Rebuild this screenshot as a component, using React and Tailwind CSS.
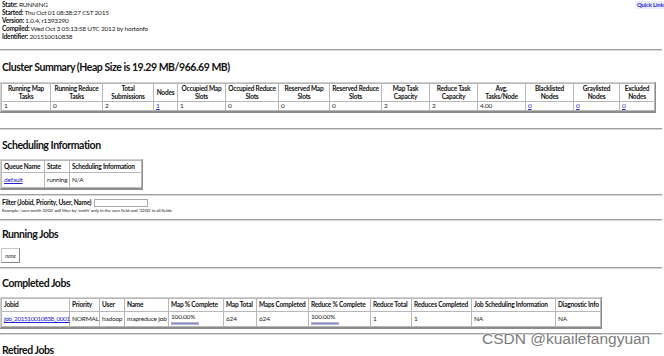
const F = "font-['Lato',sans-serif]";

function Hr({ className = "" }) {
  return <div className={"h-[2px] w-[662px] border-t border-t-[#a0a0a0] border-b border-b-[#d8d8d8] " + className} />;
}

function H({ children, className = "" }) {
  return (
    <div className={"h-[14px] pl-[2px] text-[10.5px] leading-[14px] font-bold text-[#111] tracking-[-0.45px] whitespace-nowrap " + className}>
      {children}
    </div>
  );
}

const th = "border border-[#b8b8b8] px-[2px] py-0 font-bold text-[#111] align-middle";
const td = "border border-[#b8b8b8] px-[2px] py-0 align-middle text-left";
const lk = "text-[#2323d6] underline";

function Wrap({ children, className = "" }) {
  return (
    <div className={"border border-t-[#d0d0d0] border-l-[#d0d0d0] border-r-2 border-b-2 border-r-[#8c8c8c] border-b-[#8c8c8c] " + className}>
      {children}
    </div>
  );
}

function Bar() {
  return (
    <div className="mt-[2px] h-[3px] w-[28px] border border-[#b0b0c8] bg-[#8f8fd8]" />
  );
}

export default function App() {
  const cw = [49, 52, 51, 24, 48, 53, 51, 52, 48, 48, 48, 48, 46, 35];
  const ch = [
    ["Running Map", "Tasks"],
    ["Running Reduce", "Tasks"],
    ["Total", "Submissions"],
    ["Nodes"],
    ["Occupied Map", "Slots"],
    ["Occupied Reduce", "Slots"],
    ["Reserved Map", "Slots"],
    ["Reserved Reduce", "Slots"],
    ["Map Task", "Capacity"],
    ["Reduce Task", "Capacity"],
    ["Avg.", "Tasks/Node"],
    ["Blacklisted", "Nodes"],
    ["Graylisted", "Nodes"],
    ["Excluded", "Nodes"],
  ];
  const cd = ["1", "0", "2", "L1", "1", "0", "0", "0", "2", "2", "4.00", "L0", "L0", "L0"];

  const jw = [68, 30, 25, 44, 55, 33, 52, 62, 41, 60, 84, 45];
  const jh = ["Jobid", "Priority", "User", "Name", "Map % Complete", "Map Total", "Maps Completed", "Reduce % Complete", "Reduce Total", "Reduces Completed", "Job Scheduling Information", "Diagnostic Info"];

  return (
    <div className={"relative w-[664px] h-[356px] overflow-hidden bg-white text-[#222] text-[6.5px] leading-[8px] tracking-[-0.2px] " + F}>
      <div className="absolute left-[635px] top-[1px] bg-[#ececfa] pl-[2px] pr-[4px] text-[#2b2bd8] font-bold text-[6px] leading-[8px] whitespace-nowrap">
        Quick Links
      </div>

      <div className="pl-[2px] pt-[1px] h-[41px]">
        <div><b className="text-[#111]">State:</b> RUNNING</div>
        <div><b className="text-[#111]">Started:</b> Thu Oct 01 08:38:27 CST 2015</div>
        <div><b className="text-[#111]">Version:</b> 1.0.4, r1393290</div>
        <div><b className="text-[#111]">Compiled:</b> Wed Oct 3 05:13:58 UTC 2012 by hortonfo</div>
        <div><b className="text-[#111]">Identifier:</b> 201510010838</div>
      </div>

      <Hr className="mt-[8px]" />
      <H className="mt-[9px]">Cluster Summary (Heap Size is 19.29 MB/966.69 MB)</H>
      <Wrap className="mt-[8px] w-[656px] h-[31px]">
        <table className="table-fixed border-collapse w-[653px] h-full">
          <tbody>
            <tr className="h-[18px]">
              {ch.map((h, i) => (
                <th key={i} className={th + " text-center"} style={{ width: cw[i] }}>
                  {h.map((l, j) => <div key={j} className="whitespace-nowrap">{l}</div>)}
                </th>
              ))}
            </tr>
            <tr className="h-[9px]">
              {cd.map((d, i) => (
                <td key={i} className={td}>
                  {d.startsWith("L") ? <span className={lk}>{d.slice(1)}</span> : d}
                </td>
              ))}
            </tr>
          </tbody>
        </table>
      </Wrap>

      <Hr className="mt-[15px]" />
      <H className="mt-[8px]">Scheduling Information</H>
      <Wrap className="mt-[7px] w-[143px] h-[31px]">
        <table className="table-fixed border-collapse w-[140px] h-full">
          <tbody>
            <tr className="h-[12px]">
              <th className={th + " text-left w-[43px]"}>Queue Name</th>
              <th className={th + " text-left w-[25px]"}>State</th>
              <th className={th + " text-left w-[72px]"}>Scheduling Information</th>
            </tr>
            <tr className="h-[14px]">
              <td className={td}><span className={lk}>default</span></td>
              <td className={td}>running</td>
              <td className={td}>N/A</td>
            </tr>
          </tbody>
        </table>
      </Wrap>

      <Hr className="mt-[4px]" />
      <div className="mt-[3px] pl-[2px] flex items-center h-[8px]">
        <b className="text-[#111] whitespace-nowrap">Filter (Jobid, Priority, User, Name)</b>
        <div className="ml-[3px] w-[54px] h-[8px] border border-[#a8a8a8] bg-white" />
      </div>
      <div className="pl-[2px] text-[4.6px] leading-[6px] h-[6px] tracking-[-0.1px] whitespace-nowrap">
        Example: 'user:smith 3200' will filter by 'smith' only in the user field and '3200' in all fields
      </div>

      <Hr className="mt-[6px]" />
      <H className="mt-[6px]">Running Jobs</H>
      <div className="mt-[7px] ml-[1px] w-[19px] h-[15px] border border-t-[#c8c8c8] border-l-[#c8c8c8] border-r-[#888] border-b-[#888] flex items-center justify-center italic text-[5.5px] text-[#333]">
        none
      </div>

      <Hr className="mt-[4px]" />
      <H className="mt-[7px]">Completed Jobs</H>
      <Wrap className="mt-[7px] w-[602px] h-[32px]">
        <table className="table-fixed border-collapse w-[599px] h-full">
          <tbody>
            <tr className="h-[13px]">
              {jh.map((h, i) => (
                <th key={i} className={th + " text-left whitespace-nowrap"} style={{ width: jw[i] }}>{h}</th>
              ))}
            </tr>
            <tr className="h-[15px]">
              <td className={td + " whitespace-nowrap tracking-[-0.45px]"}><span className={lk}>job_201510010838_0001</span></td>
              <td className={td}>NORMAL</td>
              <td className={td}>hadoop</td>
              <td className={td + " whitespace-nowrap"}>mapreduce job</td>
              <td className={td}><div className="leading-[6px]">100.00%</div><Bar /></td>
              <td className={td}>624</td>
              <td className={td}>624</td>
              <td className={td}><div className="leading-[6px]">100.00%</div><Bar /></td>
              <td className={td}>1</td>
              <td className={td}>1</td>
              <td className={td}>NA</td>
              <td className={td}>NA</td>
            </tr>
          </tbody>
        </table>
      </Wrap>

      <Hr className="mt-[4px]" />
      <H className="mt-[8px]">Retired Jobs</H>

      <div className="absolute left-[482px] top-[331px] text-[15.5px] leading-none tracking-normal font-['Liberation_Sans',sans-serif] text-[#7c7c7c] whitespace-nowrap [text-shadow:0_0_2px_#fff,0_0_2px_#fff]">
        CSDN @kuailefangyuan
      </div>
    </div>
  );
}
